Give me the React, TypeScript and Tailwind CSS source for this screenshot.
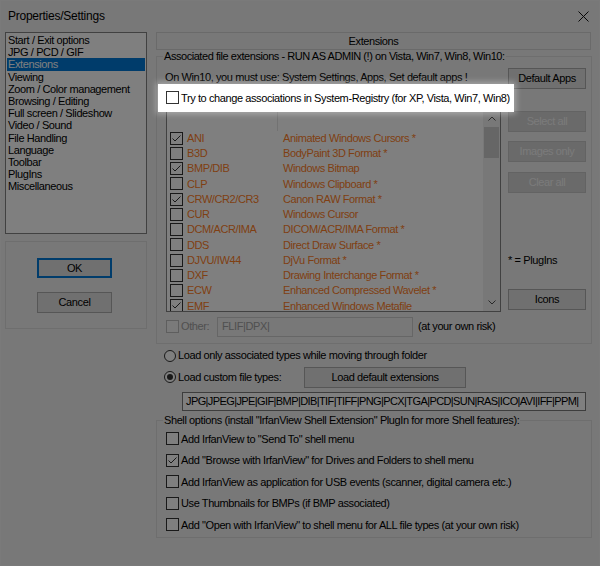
import React from 'react';

const extensions: { ext: string; desc: string; on: boolean }[] = [
  { ext: 'ANI', desc: 'Animated Windows Cursors *', on: true },
  { ext: 'B3D', desc: 'BodyPaint 3D Format *', on: false },
  { ext: 'BMP/DIB', desc: 'Windows Bitmap', on: true },
  { ext: 'CLP', desc: 'Windows Clipboard *', on: false },
  { ext: 'CRW/CR2/CR3', desc: 'Canon RAW Format *', on: true },
  { ext: 'CUR', desc: 'Windows Cursor', on: false },
  { ext: 'DCM/ACR/IMA', desc: 'DICOM/ACR/IMA Format *', on: false },
  { ext: 'DDS', desc: 'Direct Draw Surface *', on: false },
  { ext: 'DJVU/IW44', desc: 'DjVu Format *', on: false },
  { ext: 'DXF', desc: 'Drawing Interchange Format *', on: false },
  { ext: 'ECW', desc: 'Enhanced Compressed Wavelet *', on: false },
  { ext: 'EMF', desc: 'Enhanced Windows Metafile', on: true },
];

const pages = [
  'Start / Exit options',
  'JPG / PCD / GIF',
  'Extensions',
  'Viewing',
  'Zoom / Color management',
  'Browsing / Editing',
  'Full screen / Slideshow',
  'Video / Sound',
  'File Handling',
  'Language',
  'Toolbar',
  'PlugIns',
  'Miscellaneous',
];

const shellOptions: { label: string; on: boolean }[] = [
  { label: 'Add IrfanView to "Send To" shell menu', on: false },
  { label: 'Add "Browse with IrfanView" for Drives and Folders to shell menu', on: true },
  { label: 'Add IrfanView as application for USB events (scanner, digital camera etc.)', on: false },
  { label: 'Use Thumbnails for BMPs (if BMP associated)', on: false },
  { label: 'Add "Open with IrfanView" to shell menu for ALL file types (at your own risk)', on: false },
];

const Check = ({ on = false, disabled = false }: { on?: boolean; disabled?: boolean }) => (
  <span
    className={
      'inline-flex shrink-0 w-[13px] h-[13px] items-center justify-center border ' +
      (disabled ? 'border-[#bcbcbc] bg-[#f4f4f4]' : 'border-[#333333] bg-white')
    }
  >
    {on && (
      <svg width="11" height="11" viewBox="0 0 11 11">
        <path d="M1.5 5.5 L4 8 L9.5 2.5" fill="none" stroke="#333" strokeWidth="1" />
      </svg>
    )}
  </span>
);

const Radio = ({ on = false }: { on?: boolean }) => (
  <span className="inline-flex shrink-0 w-[12px] h-[12px] items-center justify-center rounded-full border border-[#333333] bg-white">
    {on && <span className="w-[6px] h-[6px] rounded-full bg-[#333333]" />}
  </span>
);

const Button = ({
  children,
  className = '',
  disabled = false,
  primary = false,
}: {
  children: React.ReactNode;
  className?: string;
  disabled?: boolean;
  primary?: boolean;
}) => (
  <div
    className={
      'flex items-center justify-center border ' +
      (disabled
        ? 'bg-[#d4d4d4] border-[#c6c6c6] text-[#f6f6f6] '
        : primary
        ? 'bg-[#e1e1e1] border-[#0078d7] text-black '
        : 'bg-[#e1e1e1] border-[#adadad] text-black ') +
      className
    }
  >
    {children}
  </div>
);

const Chevron = ({ down = false }: { down?: boolean }) => (
  <svg width="8" height="5" viewBox="0 0 8 5">
    <path d={down ? 'M0.5 0.5 L4 4 L7.5 0.5' : 'M0.5 4.5 L4 1 L7.5 4.5'} fill="none" stroke="#505050" strokeWidth="1" />
  </svg>
);

export default function App() {
  return (
    <div className="relative w-[600px] h-[566px] overflow-hidden bg-[#f0f0f0] border border-[#7a7a7a] font-['Liberation_Sans',Arial,sans-serif] text-[11px] tracking-[-0.4px] text-black">
      {/* title bar */}
      <div className="flex h-[31px] items-center justify-between pl-[7px] pr-[10px]">
        <span className="-mt-[2px] text-[12px] tracking-[-0.25px]">Properties/Settings</span>
        <svg width="11" height="11" viewBox="0 0 11 11">
          <path d="M0.5 0.5 L10.5 10.5 M10.5 0.5 L0.5 10.5" stroke="#111" strokeWidth="1" />
        </svg>
      </div>

      <div className="flex gap-[9px] px-[4px]">
        {/* left column: page list + OK/Cancel */}
        <div className="w-[142px] shrink-0">
          <div className="h-[202px] border border-[#828282] bg-white p-[1px]">
            {pages.map((p) => (
              <div
                key={p}
                className={
                  'h-[12.2px] leading-[12.2px] pl-[1px] whitespace-nowrap ' +
                  (p === 'Extensions' ? 'bg-[#0078d7] text-white' : '')
                }
              >
                {p}
              </div>
            ))}
          </div>
          <div className="mt-[7px] h-[88px] border border-[#dcdcdc] pl-[31px]">
            <Button primary className="mt-[16px] w-[75px] h-[20px] border-[2px]">OK</Button>
            <Button className="mt-[14px] w-[75px] h-[21px]">Cancel</Button>
          </div>
        </div>

        {/* right column */}
        <div className="w-[436px] shrink-0">
          <div className="flex h-[18px] w-[435px] items-center justify-center border border-[#d5d5d5]">Extensions</div>

          <fieldset className="border border-[#dcdcdc] px-0 pb-[6px]">
            <legend className="ml-[6px] px-[1px] leading-[13px] tracking-[-0.45px]">
              Associated file extensions - RUN AS ADMIN (!) on Vista, Win7, Win8, Win10:
            </legend>

            <div className="mt-[4.5px] flex h-[21px] items-center justify-between pr-[5px]">
              <span className="pl-[8px] -mt-[2px]">On Win10, you must use: System Settings, Apps, Set default apps !</span>
              <Button className="w-[78px] h-[21px]">Default Apps</Button>
            </div>

            {/* highlighted option */}
            <div className="relative z-20 -mt-[5px] ml-[1px] flex h-[28px] w-[356px] items-center gap-[2px] bg-white pl-[8px] shadow-[0_0_6px_2px_rgba(255,255,255,0.35)]">
              <Check />
              <span className="pt-[1px]">Try to change associations in System-Registry (for XP, Vista, Win7, Win8)</span>
            </div>

            <div className="-mt-[2px] flex">
              {/* list view */}
              <div className="ml-[9px] flex h-[202px] w-[335px] border border-[#828282] bg-white">
                <div className="flex-1 overflow-hidden">
                  <div className="flex h-[20px]">
                    <div className="w-[111px] border-r border-[#e5e5e5]" />
                  </div>
                  {extensions.map((e) => (
                    <div key={e.ext} className="flex h-[15.25px] items-center text-[#ff7f27]">
                      <div className="flex w-[111px] items-center gap-[4px] pl-[3px]">
                        <Check on={e.on} />
                        <span>{e.ext}</span>
                      </div>
                      <span className="pl-[5px] whitespace-nowrap">{e.desc}</span>
                    </div>
                  ))}
                </div>
                <div className="flex w-[17px] flex-col bg-[#f0f0f0]">
                  <div className="flex h-[16px] items-center justify-center">
                    <Chevron />
                  </div>
                  <div className="mx-[1px] h-[31px] bg-[#cdcdcd]" />
                  <div className="flex-1" />
                  <div className="flex h-[17px] items-center justify-center">
                    <Chevron down />
                  </div>
                </div>
              </div>

              <div className="ml-[7px] w-[78px]">
                <Button disabled className="mt-[1px] h-[21px]">Select all</Button>
                <Button disabled className="mt-[9px] h-[21px]">Images only</Button>
                <Button disabled className="mt-[10px] h-[21px]">Clear all</Button>
                <div className="mt-[61px] leading-[12px]">* = PlugIns</div>
                <Button className="mt-[23px] h-[21px]">Icons</Button>
              </div>
            </div>

            <div className="mt-[5px] flex h-[20px] items-center pl-[9px]">
              <Check disabled />
              <span className="w-[38px] pl-[2px] text-[#a0a0a0]">Other:</span>
              <div className="flex h-[20px] w-[196px] items-center border border-[#cccccc] pl-[4px] text-[#a0a0a0]">FLIF|DPX|</div>
              <span className="ml-[5px]">(at your own risk)</span>
            </div>
          </fieldset>

          <div className="mt-[5px] flex h-[14px] items-center gap-[2px] pl-[8px]">
            <Radio />
            <span>Load only associated types while moving through folder</span>
          </div>
          <div className="mt-[4px] flex h-[21px] items-center pl-[8px]">
            <Radio on />
            <span className="w-[128px] pl-[2px]">Load custom file types:</span>
            <Button className="w-[162px] h-[21px]">Load default extensions</Button>
          </div>
          <div className="ml-[26px] mt-[4px] flex h-[19px] w-[404px] items-center overflow-hidden whitespace-nowrap border border-[#7a7a7a] bg-white pl-[3px] tracking-[-0.6px]">
            JPG|JPEG|JPE|GIF|BMP|DIB|TIF|TIFF|PNG|PCX|TGA|PCD|SUN|RAS|ICO|AVI|IFF|PPM|
          </div>

          <fieldset className="mt-[3.5px] border border-[#dcdcdc] px-0 pb-[1px]">
            <legend className="ml-[6px] px-[1px] leading-[13px]">
              Shell options (install "IrfanView Shell Extension" PlugIn for more Shell features):
            </legend>
            <div className="mt-[1px]">
              {shellOptions.map((o) => (
                <div key={o.label} className="flex h-[21.5px] items-center gap-[2px] pl-[9px]">
                  <Check on={o.on} />
                  <span>{o.label}</span>
                </div>
              ))}
            </div>
          </fieldset>
        </div>
      </div>

      {/* dimming layer */}
      <div className="pointer-events-none absolute inset-0 z-10 bg-black/50" />
    </div>
  );
}
